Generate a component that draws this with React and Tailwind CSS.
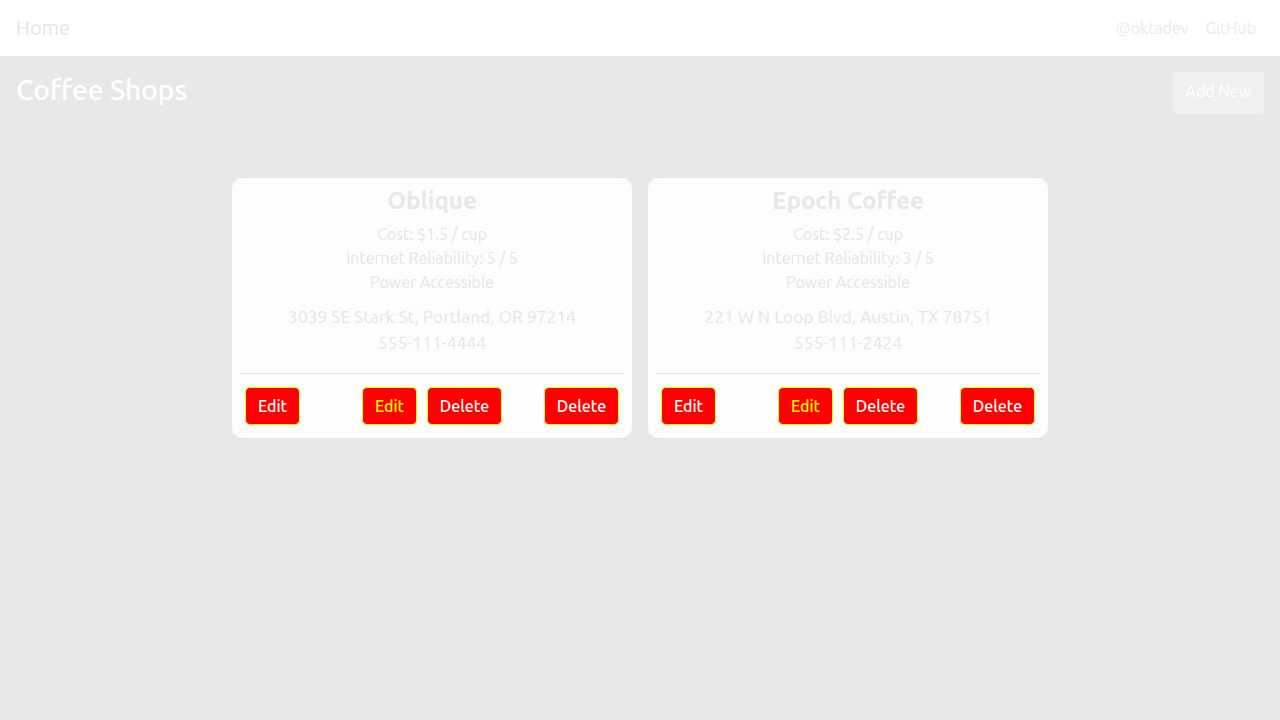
const shops = [
  {
    name: "Oblique",
    cost: "$1.5",
    reliability: 5,
    address: "3039 SE Stark St, Portland, OR 97214",
    phone: "555-111-4444",
  },
  {
    name: "Epoch Coffee",
    cost: "$2.5",
    reliability: 3,
    address: "221 W N Loop Blvd, Austin, TX 78751",
    phone: "555-111-2424",
  },
];

function RedButton({ children, yellow }) {
  return (
    <button
      className={
        "flex h-[38px] w-full items-center justify-center rounded-[5px] border border-[#ffff00] bg-[#ff0000] text-base font-medium " +
        (yellow ? "text-[#ffff00]" : "text-white")
      }
    >
      {children}
    </button>
  );
}

function ShopCard({ shop }) {
  return (
    <div className="flex w-[400px] flex-col rounded-[10px] bg-[#fdfdfd] px-2 pt-[7px] pb-[13px] text-center">
      <h2 className="text-2xl leading-8 font-bold text-[#e8e8e8]">{shop.name}</h2>
      <div className="mt-[5px] text-base leading-6 text-[#e6e6e6]">
        <p>Cost: {shop.cost} / cup</p>
        <p>Internet Reliability: {shop.reliability} / 5</p>
        <p>Power Accessible</p>
      </div>
      <div className="mt-[10px] text-[17.4px] leading-[26px] text-[#e6e6e6]">
        <p>{shop.address}</p>
        <p>{shop.phone}</p>
      </div>
      <div className="mt-[17px] border-t border-[#e6e6e6] px-[5px] pt-[13px]">
        <div className="flex">
          <div className="w-[55px]">
            <RedButton>Edit</RedButton>
          </div>
          <div className="ml-[62px] w-[55px]">
            <RedButton yellow>Edit</RedButton>
          </div>
          <div className="ml-[10px] w-[75px]">
            <RedButton>Delete</RedButton>
          </div>
          <div className="ml-[42px] w-[75px]">
            <RedButton>Delete</RedButton>
          </div>
        </div>
      </div>
    </div>
  );
}

export default function App() {
  return (
    <div className="min-h-screen bg-[#e8e8e8] font-['Ubuntu','Open_Sans',sans-serif]">
      <nav className="flex h-14 items-center justify-between bg-white px-4">
        <a className="text-xl text-[#e6e6e6]">Home</a>
        <div className="flex text-base text-[#ebebeb]">
          <a className="px-[9px]">@oktadev</a>
          <a className="pl-2 pr-2">GitHub</a>
        </div>
      </nav>
      <main className="px-4 pt-4">
        <div className="flex items-start justify-between">
          <h1 className="text-[28px] leading-9 font-medium text-white">Coffee Shops</h1>
          <button className="h-[42px] rounded-[4px] bg-[#f0f0f0] px-[13px] pb-1 text-base text-white">
            Add New
          </button>
        </div>
        <div className="mt-16 flex justify-center gap-4">
          {shops.map((shop) => (
            <ShopCard key={shop.name} shop={shop} />
          ))}
        </div>
      </main>
    </div>
  );
}
